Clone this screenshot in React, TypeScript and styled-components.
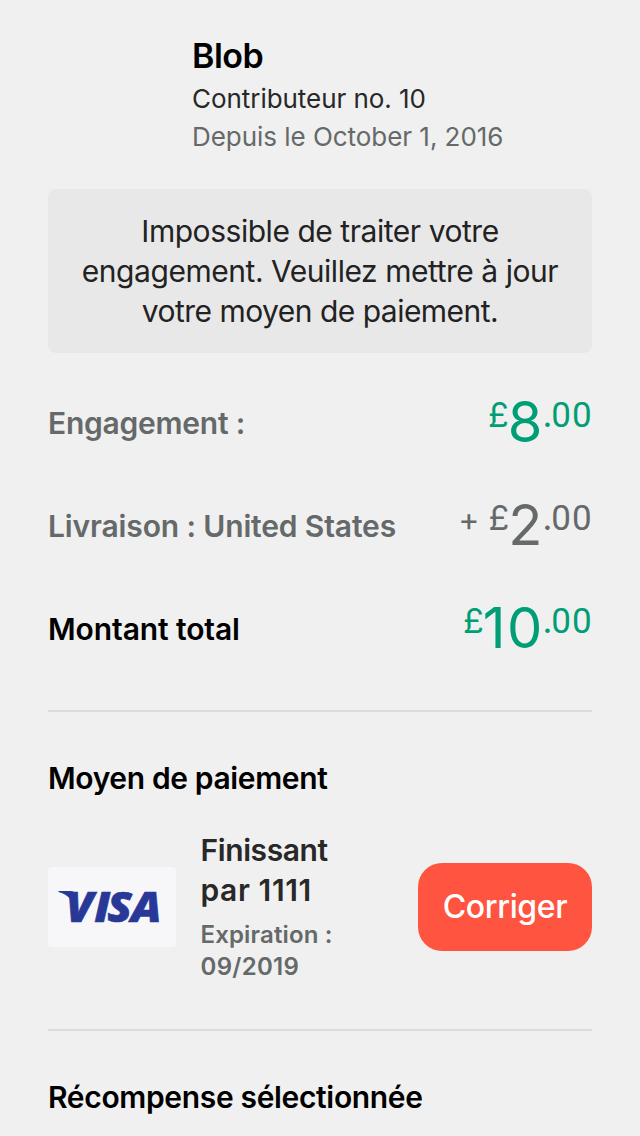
import React from "react";
import styled, { createGlobalStyle } from "styled-components";

const GlobalStyle = createGlobalStyle`
  * { box-sizing: border-box; }
  body { margin: 0; background: #f0f0f0; font-family: Inter, "Liberation Sans", sans-serif; overflow: hidden; }
  h1, h2, p { margin: 0; }
`;
const Page = styled.main`
  width: 640px; height: 1136px; overflow: hidden; padding: 35px 48px 0; background: #f0f0f0;
`;
const Header = styled.header`
  padding-left: 144px; height: 154px; display: flex; flex-direction: column; align-items: flex-start;
`;
const Line = styled.p<{ $size: number; $lh: number; $weight?: number; $color?: string; $track?: number }>`
  font-size: ${p => p.$size}px; line-height: ${p => p.$lh}px; font-weight: ${p => p.$weight ?? 400};
  color: ${p => p.$color ?? "#000"}; letter-spacing: ${p => p.$track ?? 0}px; white-space: nowrap;
`;
const Name = styled(Line)`
  padding-bottom: 4px;
`;
const Notice = styled.section`
  height: 164px; padding: 22px 0; border-radius: 8px; background: #e8e8e8; text-align: center;
  display: flex; flex-direction: column; align-items: center;
`;
const Amounts = styled.section`
  height: 357px; padding-top: 18px;
`;
const AmountRow = styled.div`
  height: 103px; display: flex; justify-content: space-between; align-items: flex-start; padding-top: 32px;
`;
const Money = styled.div<{ $color: string }>`
  display: flex; color: ${p => p.$color}; white-space: nowrap; margin-top: -10px;
`;
const Small = styled.span`
  font-size: 34px; line-height: 44px; margin-right: -1px;
`;
const Plus = styled(Small)`
  padding-top: 2px; margin-right: 9px; font-size: 32px;
`;
const Cents = styled.span`
  font-family: Roboto, sans-serif; font-size: 35px; line-height: 46px; letter-spacing: 1.2px; margin-right: -1px;
`;
const Big = styled.span`
  font-size: 56px; line-height: 58px; letter-spacing: 1.5px; margin-right: -1.5px;
`;
const Section = styled.section`
  border-top: 2px solid #dcdcdc; padding-top: 46px; height: 319px;
`;
const Payment = styled.div`
  display: flex; align-items: center; height: 152px; margin-top: 33px;
`;
const Card = styled.div`
  width: 128px; height: 80px; border-radius: 4px; background: #f7f7fa; flex: none;
`;
const Logo = styled.svg`
  display: block; font-family: "Open Sans", sans-serif; font-weight: 800; font-style: italic; font-size: 43px;
`;
const Details = styled.div`
  margin: 0 0 1px 24.5px; width: 217.5px; display: flex; flex-direction: column; align-items: flex-start;
`;
const Expiry = styled.div`
  padding-top: 9px;
`;
const FixButton = styled.button`
  width: 174px; height: 88px; border: 0; border-radius: 24px; background: #ff5540; padding: 0 0 1px;
  display: flex; align-items: center; justify-content: center; font-family: inherit;
`;

const grey = "#656969";

function Amount({ color, plus, whole }: { color: string; plus?: boolean; whole: string }) {
  return (
    <Money $color={color}>
      {plus && <Plus>+</Plus>}
      <Small>£</Small><Big>{whole}</Big><Small>.</Small><Cents>00</Cents>
    </Money>
  );
}

export default function App() {
  return <><GlobalStyle /><Page>
    <Header>
      <Name as="h1" $size={34} $lh={41} $weight={600} $track={-0.5}>Blob</Name>
      <Line $size={26} $lh={38} $color="#282828" $track={-0.05}>Contributeur no. 10</Line>
      <Line $size={26} $lh={38} $color={grey} $track={-0.04}>Depuis le October 1, 2016</Line>
    </Header>
    <Notice>
      <Line $size={30} $lh={40} $color="#222" $track={-0.46}>Impossible de traiter votre</Line>
      <Line $size={30} $lh={40} $color="#222" $track={-0.46}>engagement. Veuillez mettre à jour</Line>
      <Line $size={30} $lh={40} $color="#222" $track={-0.52}>votre moyen de paiement.</Line>
    </Notice>
    <Amounts>
      <AmountRow><Line $size={30} $lh={40} $weight={600} $color={grey} $track={-0.24}>Engagement :</Line>
        <Amount color="#009e74" whole="8" /></AmountRow>
      <AmountRow><Line $size={30} $lh={40} $weight={600} $color={grey} $track={-0.14}>Livraison : United States</Line>
        <Amount color={grey} plus whole="2" /></AmountRow>
      <AmountRow><Line $size={30} $lh={40} $weight={600} $track={-0.1}>Montant total</Line>
        <Amount color="#009e74" whole="10" /></AmountRow>
    </Amounts>
    <Section>
      <Line as="h2" $size={30} $lh={40} $weight={600} $track={-0.37}>Moyen de paiement</Line>
      <Payment>
        <Card>
          <Logo width="128" height="80" viewBox="0 0 128 80" fill="#283897" role="img">
            <path d="M10.5 24H22Q27 24 28 28L30 44Q23 28 10.5 25Z" />
            <text x="17 44 56.5 79" y="55" transform="scale(1.05 1)" stroke="#283897" strokeWidth=".6">VISA</text>
          </Logo>
        </Card>
        <Details>
          <Line $size={30} $lh={40} $weight={600} $color="#282828" $track={-0.4}>Finissant</Line>
          <Line $size={30} $lh={40} $weight={600} $color="#282828" $track={0.6}>par 1111</Line>
          <Expiry>
            <Line $size={24} $lh={32} $weight={600} $color={grey} $track={0.15}>Expiration :</Line>
            <Line $size={24} $lh={32} $weight={600} $color={grey} $track={0.3}>09/2019</Line>
          </Expiry>
        </Details>
        <FixButton><Line as="span" $size={32} $lh={40} $weight={500} $color="#fff" $track={-0.35}>Corriger</Line></FixButton>
      </Payment>
    </Section>
    <Section><Line as="h2" $size={30} $lh={40} $weight={600} $track={-0.34}>Récompense sélectionnée</Line></Section>
  </Page></>;
}
